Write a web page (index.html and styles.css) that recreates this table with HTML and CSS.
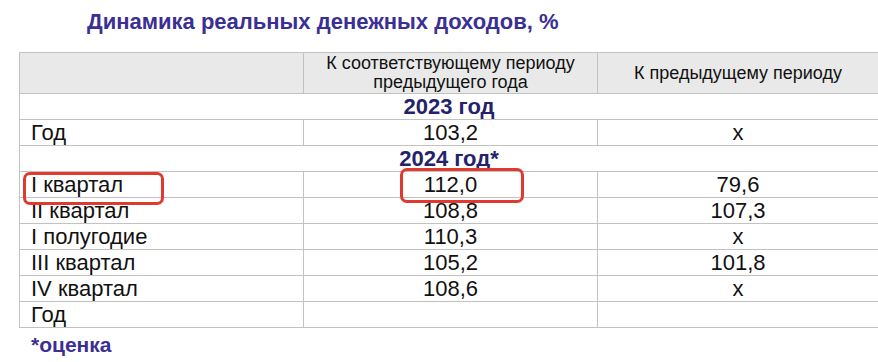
FILE: index.html
```html
<!DOCTYPE html>
<html lang="ru">
<head>
<meta charset="utf-8">
<link rel="stylesheet" href="styles.css">
</head>
<body>
<div class="page">
  <h1 class="title">Динамика реальных денежных доходов, %</h1>
  <div class="table-wrap">
    <table class="data">
      <colgroup>
        <col class="c1"><col class="c2"><col class="c3">
      </colgroup>
      <thead>
        <tr class="head">
          <th></th>
          <th>К соответствующему периоду<br>предыдущего года</th>
          <th>К предыдущему периоду</th>
        </tr>
      </thead>
      <tbody>
        <tr class="year"><td colspan="3">2023 год</td></tr>
        <tr><td class="lbl">Год</td><td>103,2</td><td>x</td></tr>
        <tr class="year"><td colspan="3">2024 год*</td></tr>
        <tr><td class="lbl">I квартал</td><td>112,0</td><td>79,6</td></tr>
        <tr><td class="lbl">II квартал</td><td>108,8</td><td>107,3</td></tr>
        <tr><td class="lbl">I полугодие</td><td>110,3</td><td>x</td></tr>
        <tr><td class="lbl">III квартал</td><td>105,2</td><td>101,8</td></tr>
        <tr><td class="lbl">IV квартал</td><td>108,6</td><td>x</td></tr>
        <tr><td class="lbl">Год</td><td></td><td></td></tr>
      </tbody>
    </table>
    <div class="mark mark-a"></div>
    <div class="mark mark-b"></div>
  </div>
  <div class="note">*оценка</div>
</div>
</body>
</html>
```

FILE: styles.css
```css
html, body {
  margin: 0;
  padding: 0;
  background: #ffffff;
}
.page {
  font-family: "Liberation Sans", Arial, sans-serif;
  color: #111111;
}
.title {
  margin: 0;
  padding: 9px 0 0 87px;
  height: 52px;
  box-sizing: border-box;
  font-size: 22px;
  line-height: 26px;
  font-weight: bold;
  color: #3b2f94;
}
.table-wrap {
  position: relative;
  margin-left: 19px;
  width: 859px;
}
.data {
  border-collapse: collapse;
  width: 859px;
  table-layout: fixed;
}
.c1 { width: 284px; }
.c2 { width: 294px; }
.c3 { width: 281px; }
.data td, .data th {
  border: 1px solid #c2c2c2;
  padding: 0;
  text-align: center;
  font-size: 22px;
  line-height: 25px;
  height: 25px;
  font-weight: normal;
  white-space: nowrap;
}
.data tr.head th {
  background: #e9e9e9;
  font-size: 18px;
  line-height: 19px;
  height: 40px;
  color: #111111;
}
.data td.lbl {
  text-align: left;
  padding-left: 11px;
}
.data tr.year td {
  font-weight: bold;
  font-size: 22px;
  color: #23236c;
}
.mark {
  position: absolute;
  border: 3.5px solid #e0392f;
  border-radius: 7px;
  box-sizing: border-box;
}
.mark-a {
  left: 4px;
  top: 120px;
  width: 141px;
  height: 33px;
}
.mark-b {
  left: 381px;
  top: 116px;
  width: 124px;
  height: 35px;
}
.note {
  padding: 5px 0 0 31px;
  font-size: 21px;
  line-height: 24px;
  font-weight: bold;
  color: #3b2f94;
}
```
